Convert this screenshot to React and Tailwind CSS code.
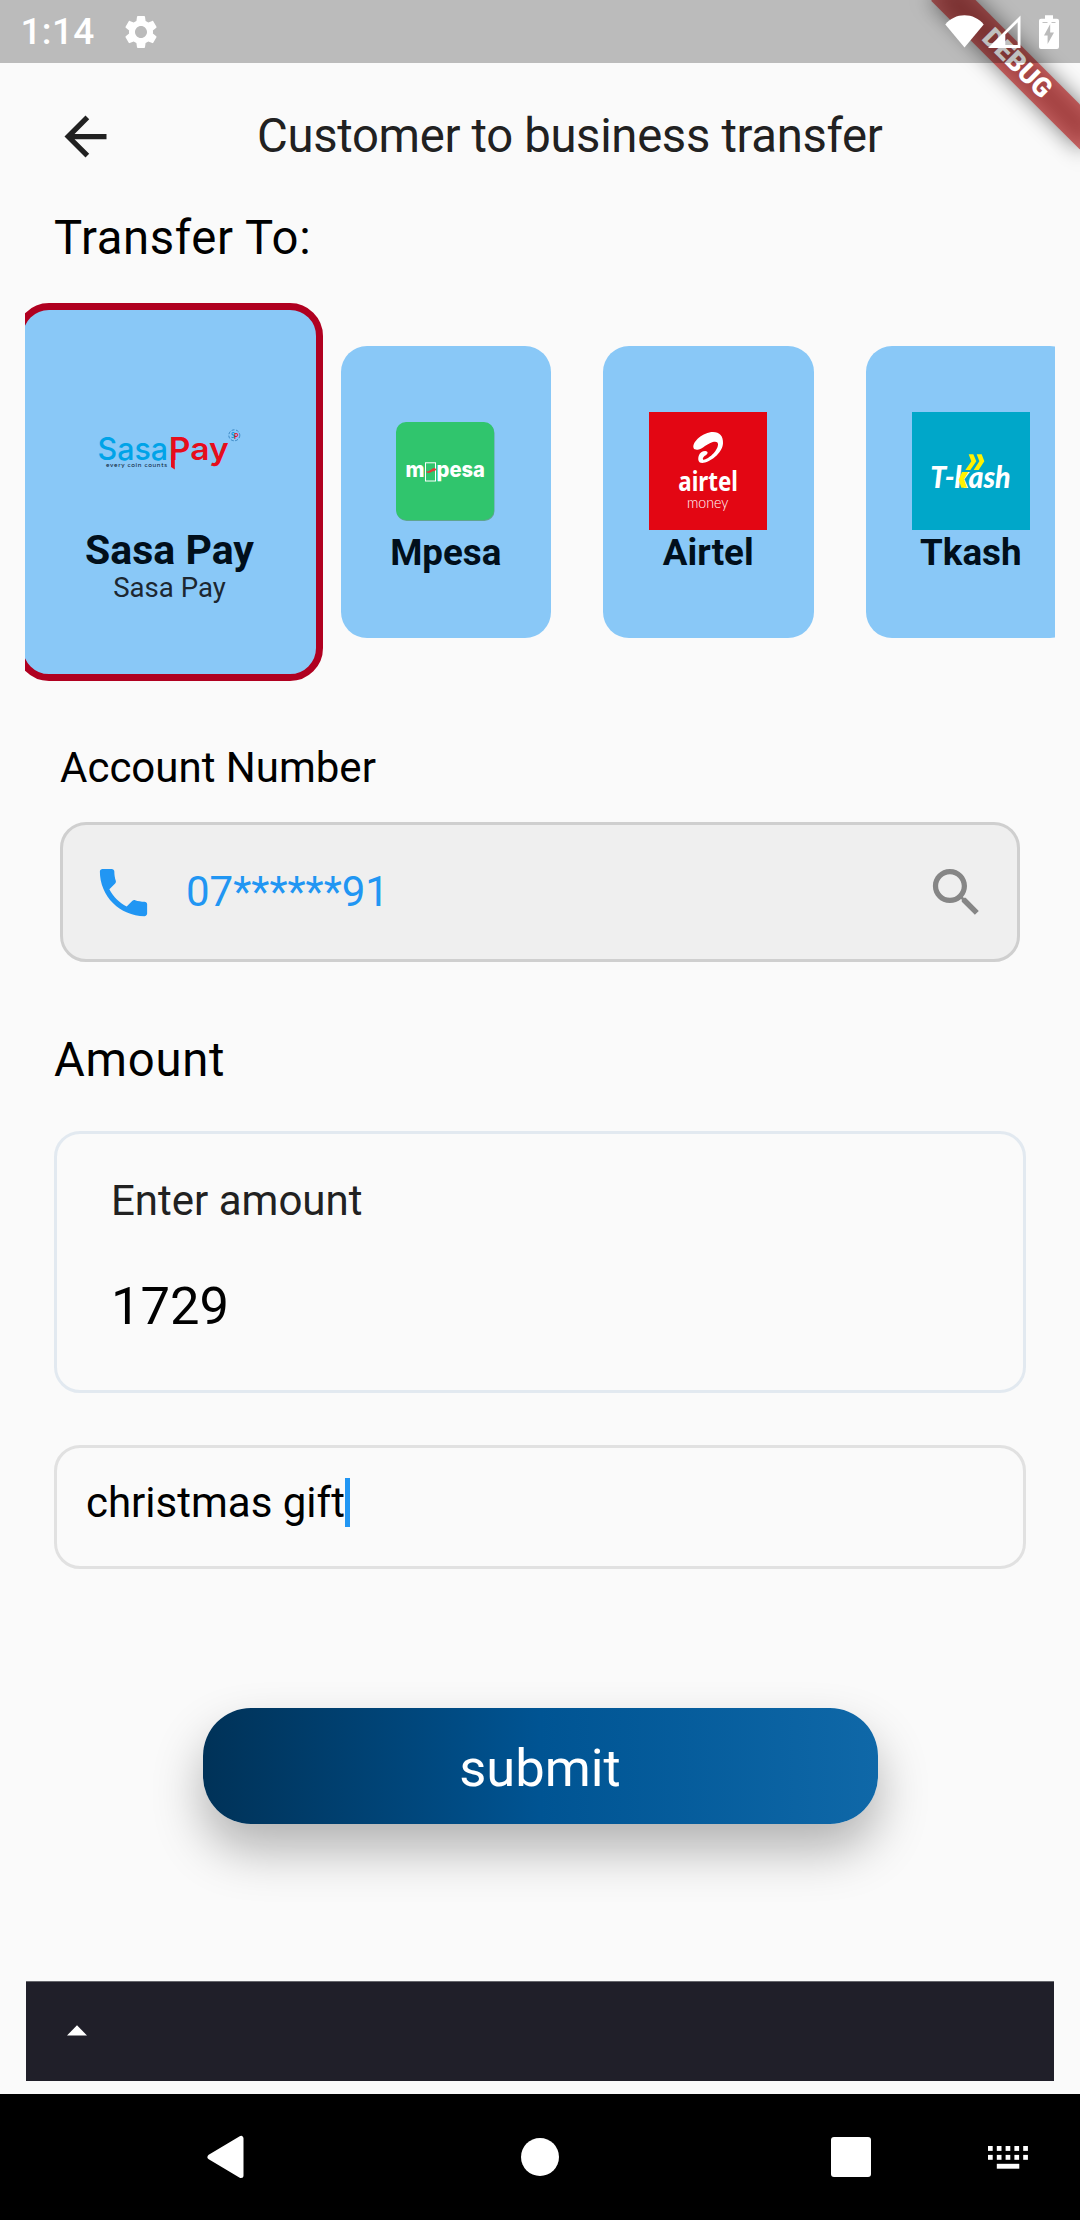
import React from "react";

function StatusBar() {
  return (
    <div className="relative z-20 flex h-[63px] items-center bg-black/25 pl-[20.500px] pr-[21px] text-white">
      <span className="text-[37px] font-medium leading-[44px] tracking-[0.3px]">1:14</span>
      <svg className="ml-[26px] h-[40px] w-[40px] shrink-0" viewBox="0 0 24 24" fill="currentColor">
        <path d="M19.14 12.94c.04-.3.06-.61.06-.94 0-.32-.02-.64-.07-.94l2.03-1.58c.18-.14.23-.41.12-.61l-1.92-3.32c-.12-.22-.37-.29-.59-.22l-2.39.96c-.5-.38-1.03-.7-1.62-.94l-.36-2.54c-.04-.24-.24-.41-.48-.41h-3.84c-.24 0-.43.17-.47.41l-.36 2.54c-.59.24-1.13.57-1.62.94l-2.39-.96c-.22-.08-.47 0-.59.22L2.74 8.87c-.12.21-.08.47.12.61l2.03 1.58c-.05.3-.09.63-.09.94s.02.64.07.94l-2.03 1.58c-.18.14-.23.41-.12.61l1.92 3.32c.12.22.37.29.59.22l2.39-.96c.5.38 1.03.7 1.62.94l.36 2.54c.05.24.24.41.48.41h3.84c.24 0 .44-.17.47-.41l.36-2.54c.59-.24 1.13-.56 1.62-.94l2.39.96c.22.08.47 0 .59-.22l1.92-3.32c.12-.22.07-.47-.12-.61l-2.01-1.58zM12 15.6c-1.98 0-3.6-1.62-3.6-3.6s1.62-3.6 3.6-3.6 3.6 1.62 3.6 3.6-1.62 3.6-3.6 3.6z" />
      </svg>
      <div className="ml-auto flex items-center">
        <svg className="h-[34px] w-[39px]" viewBox="0 0 39 34" fill="currentColor">
          <path d="M19.5 32.5 0.3 9.5C5 3.6 12 .3 19.5 .3S34 3.6 38.7 9.5Z" />
        </svg>
        <svg className="ml-[3.5px] h-[34px] w-[33px]" viewBox="0 0 33 34" fill="currentColor">
          <path fillRule="evenodd" d="M0 33 32.5 .5V33ZM17.3 19.5V30H29.7V7.3Z" />
        </svg>
        <svg className="ml-[18.5px] h-[34px] w-[20px]" viewBox="0 0 20 34" fill="currentColor">
          <path fillRule="evenodd" d="M6 .3h8v3.4h4a2 2 0 0 1 2 2V32a2 2 0 0 1-2 2H2a2 2 0 0 1-2-2V5.700a2 2 0 0 1 2-2h4ZM11.200 9 5 20.500h3.600v8.500L15 17.500h-3.800Z" />
          <path d="M3.500 7.500h5M12.500 7.500h4" stroke="#bbbbbb" strokeWidth=".9" />
        </svg>
      </div>
    </div>
  );
}

function DebugBanner() {
  return (
    <div className="pointer-events-none absolute right-0 top-0 z-10 h-[240px] w-[240px] overflow-hidden">
      <div className="absolute left-[135px] top-[73.5px] h-[31.5px] w-[210px] origin-[105px_-73.5px] rotate-45">
        <div className="absolute inset-0 bg-black/50 blur-[10.4px]" />
        <div className="relative flex h-full items-center justify-center bg-[#b71c1c]/63 text-[26.8px] font-black leading-none text-white">
          DEBUG
        </div>
      </div>
    </div>
  );
}

function SasaPayLogo() {
  return (
    <svg className="h-[60px] w-[160px]" viewBox="90 420 160 60">
      <g fontFamily="Inter, sans-serif" fontWeight="500" fontSize="31.500">
        <text x="97.500" y="460" fill="#00a3e8" textLength="70.500" lengthAdjust="spacingAndGlyphs">Sasa</text>
        <text x="168.800" y="460" fontWeight="600" fill="#e60d1c" textLength="60" lengthAdjust="spacingAndGlyphs">Pay</text>
      </g>
      <g fontFamily="Lato, sans-serif">
        <text x="106" y="467" fontSize="6.500" fill="#0b2135" textLength="61" lengthAdjust="spacing">every coin counts</text>
        <text x="231" y="438" fontSize="7" fontWeight="700" fill="#0a8fd8">S</text>
        <text x="234" y="439" fontSize="7" fontWeight="700" fill="#e60d1c">P</text>
      </g>
      <path d="M171 455h3.800v14.500l-3.800-2.500Z" fill="#e60d1c" />
      <circle cx="234.300" cy="435.300" r="5.500" fill="none" stroke="#2878b8" strokeWidth=".8" strokeDasharray="3 1.500" />
    </svg>
  );
}

function MpesaLogo() {
  return (
    <svg className="mt-[1px] h-[99px] w-[99px]" viewBox="0 0 99 99">
      <rect x=".5" y="1" width="98" height="98" rx="10" fill="#5fa58f" />
      <rect width="98" height="98" rx="10" fill="#30c56d" />
      <g fontFamily="Inter, sans-serif" fontWeight="800" fontSize="21" fill="#fff">
        <text x="9.500" y="54.600" textLength="19" lengthAdjust="spacingAndGlyphs">m</text>
        <text x="40.500" y="54.600" textLength="48.500" lengthAdjust="spacingAndGlyphs">pesa</text>
      </g>
      <rect x="29.500" y="40.800" width="10" height="18.200" fill="none" stroke="#fff" strokeWidth="1" />
      <path d="M30 49.500c3 .5 4-1.500 6-2.500 2-1.500 2-1 3-.5l1.500.5c-1 2-2 2.500-4 2.300-2 1.500-4 2.200-6 1Z" fill="#e23a3a" />
    </svg>
  );
}

function AirtelLogo() {
  return (
    <svg className="h-[118px] w-[118px] bg-[#e30613]" viewBox="0 0 354 354" fill="#fff">
      <path d="M134 109C127 90 163 60 192 60C212 60 223 72 222 94C221 124 181 153 160 153C148 153 146 143 149 132C152 122 160 117 169 117C177 118 178 124 172 128C164 133 159 139 163 143C172 146 207 119 207 97C207 87 195 88 184 93C168 100 156 114 144 113C139 113 135 112 134 109Z" />
      <text x="88" y="236" fontFamily="'Noto Sans', sans-serif" fontWeight="700" fontSize="80" textLength="179" lengthAdjust="spacingAndGlyphs">airtel</text>
      <text x="114" y="288" fontFamily="Lato, sans-serif" fontWeight="300" fontSize="46" textLength="124" lengthAdjust="spacingAndGlyphs">money</text>
    </svg>
  );
}

function TkashLogo() {
  return (
    <svg className="h-[118px] w-[118px] bg-[#00a7c9]" viewBox="0 0 354 354">
      <text x="55" y="227" fontFamily="Lato, sans-serif" fontWeight="900" fontStyle="italic" fontSize="91" fill="#fff" textLength="241" lengthAdjust="spacingAndGlyphs">T-kash</text>
      <path d="M150 180H169L156 202L165 227H148L140 203Z" fill="#fff200" />
      <path d="M170 127H184L193 148L175 174H160L178 148ZM194 127H209L217 148L200 174H185L202 148Z" fill="#fff200" />
    </svg>
  );
}

function ProviderCard({ name, children }) {
  return (
    <div className="flex h-[291.500px] w-[210.500px] shrink-0 flex-col items-center rounded-[26px] bg-[#89c8f7]">
      <div className="mt-[65.500px] flex h-[118px] items-center justify-center">{children}</div>
      <span className="mt-[1px] text-[36.750px] font-bold leading-[44px] text-[#010f1b]">{name}</span>
    </div>
  );
}

export default function App() {
  return (
    <div className="relative flex h-[2220px] w-[1080px] flex-col overflow-hidden bg-[#fafafa] font-[Roboto,sans-serif] text-black">
      <StatusBar />
      <DebugBanner />

      <header className="flex h-[147px] shrink-0 items-center pl-[54px] text-[#212121]">
        <svg className="h-[63px] w-[63px]" viewBox="0 0 24 24" fill="currentColor">
          <path d="M20 11H7.830l5.590-5.590L12 4l-8 8 8 8 1.410-1.410L7.830 13H20v-2z" />
        </svg>
        <h1 className="mb-[2px] ml-[140px] whitespace-nowrap text-[47.250px] leading-[56px] tracking-[-0.320px]">Customer to business transfer</h1>
      </header>

      <h2 className="ml-[54px] text-[47.250px] leading-[56px] tracking-[0.620px]">Transfer To:</h2>

      <section className="mx-[25px] mt-[37px] flex h-[378px] shrink-0 items-center overflow-hidden">
        <div className="-ml-[9px] flex h-[378px] w-[307px] shrink-0 flex-col items-center rounded-[33px] border-[7px] border-[#b00020] bg-[#89c8f7]">
          <div className="mt-[110px] h-[60px]">
            <SasaPayLogo />
          </div>
          <span className="mt-[46px] text-[41px] font-bold leading-[48px] text-[#010f1b]">Sasa Pay</span>
          <span className="-mt-[3px] text-[27.600px] leading-[34px] text-[#1c2731]">Sasa Pay</span>
        </div>
        <div className="ml-[17.500px] flex gap-[52px]">
          <ProviderCard name="Mpesa"><MpesaLogo /></ProviderCard>
          <ProviderCard name="Airtel"><AirtelLogo /></ProviderCard>
          <ProviderCard name="Tkash"><TkashLogo /></ProviderCard>
        </div>
      </section>

      <section className="mx-[60px] mt-[63px]">
        <label className="block text-[42px] leading-[48px]">Account Number</label>
        <div className="mt-[30px] flex h-[140px] items-center rounded-[26px] border-[3px] border-[#cfcfcf] bg-[#efefef] pl-[29px] pr-[29px]">
          <svg className="h-[63px] w-[63px] text-[#2196f3]" viewBox="0 0 24 24" fill="currentColor">
            <path d="M6.620 10.790c1.440 2.830 3.760 5.140 6.590 6.590l2.200-2.200c.27-.27.67-.36 1.020-.24 1.120.37 2.330.57 3.570.57.55 0 1 .45 1 1V20c0 .55-.45 1-1 1-9.390 0-17-7.610-17-17 0-.55.45-1 1-1h3.500c.55 0 1 .45 1 1 0 1.250.2 2.450.57 3.570.11.35.03.74-.25 1.020l-2.200 2.200z" />
          </svg>
          <span className="ml-[31px] text-[42px] leading-[48px] text-[#2196f3]">07******91</span>
          <svg className="ml-auto h-[63px] w-[63px] text-[#868686]" viewBox="0 0 24 24" fill="currentColor">
            <path d="M15.500 14h-.79l-.28-.27C15.410 12.590 16 11.110 16 9.500 16 5.910 13.090 3 9.500 3S3 5.910 3 9.500 5.910 16 9.500 16c1.610 0 3.090-.59 4.230-1.570l.27.28v.79l5 4.990L20.490 19l-4.990-5zm-6 0C7.010 14 5 11.990 5 9.500S7.010 5 9.500 5 14 7.010 14 9.500 11.990 14 9.500 14z" />
          </svg>
        </div>
      </section>

      <section className="mx-[54px] mt-[70px]">
        <h2 className="text-[47.250px] leading-[56px] tracking-[0.750px]">Amount</h2>
        <div className="mt-[43px] flex h-[262px] flex-col rounded-[26px] border-[3px] border-[#e2e9f0] pl-[54px] pt-[43px]">
          <span className="text-[42px] leading-[48px] text-[#212121]">Enter amount</span>
          <span className="mt-[53px] text-[52.500px] leading-[56px]">1729</span>
        </div>
        <div className="mt-[52px] flex h-[124px] items-start rounded-[26px] border-[3px] border-[#e1e1e1] pl-[29px] pt-[30px]">
          <span className="text-[42px] leading-[50px]">christmas gift</span>
          <span className="h-[49px] w-[5.500px] bg-[#2196f3]" />
        </div>
      </section>

      <button className="mx-auto mt-[139px] flex h-[116px] w-[675px] shrink-0 items-center justify-center rounded-[48px] bg-linear-to-r from-[#003258] via-[#005493] to-[#0f68a8] text-[52.500px] leading-[60px] text-white shadow-[0_26px_50px_rgba(0,0,0,0.290)]">
        <span className="mt-[3px]">submit</span>
      </button>

      <div className="mx-[26px] mt-[157px] flex h-[100px] shrink-0 items-center border-t border-[#66666c] bg-[#201f29] pb-[2px] pl-[41px]">
        <svg className="h-[11px] w-[20px]" viewBox="0 0 20 11" fill="#fff">
          <path d="M10 .3 20 10.500H0Z" />
        </svg>
      </div>

      <nav className="mt-[13px] flex h-[126px] shrink-0 items-center bg-black pl-[206px] text-white">
        <svg className="h-[44px] w-[40px]" viewBox="0 0 40 44" fill="currentColor">
          <path d="M4 22 35 3.500V40.500Z" stroke="currentColor" strokeWidth="5" strokeLinejoin="round" />
        </svg>
        <div className="ml-[275px] h-[38px] w-[38px] rounded-full bg-white" />
        <div className="ml-[272px] h-[40px] w-[40px] rounded-[3px] bg-white" />
        <svg className="ml-[116.500px] mt-[1px] h-[24px] w-[41px]" viewBox="0 0 41 24" fill="currentColor">
          {[0, 8.800, 17.600, 26.400, 35.200].map((x) => (
            <g key={x}>
              <rect x={x} y="0" width="4.700" height="4.900" />
              <rect x={x} y="8.900" width="4.700" height="4.900" />
            </g>
          ))}
          <rect x="8.800" y="17.800" width="22.500" height="4.900" />
        </svg>
      </nav>
    </div>
  );
}
